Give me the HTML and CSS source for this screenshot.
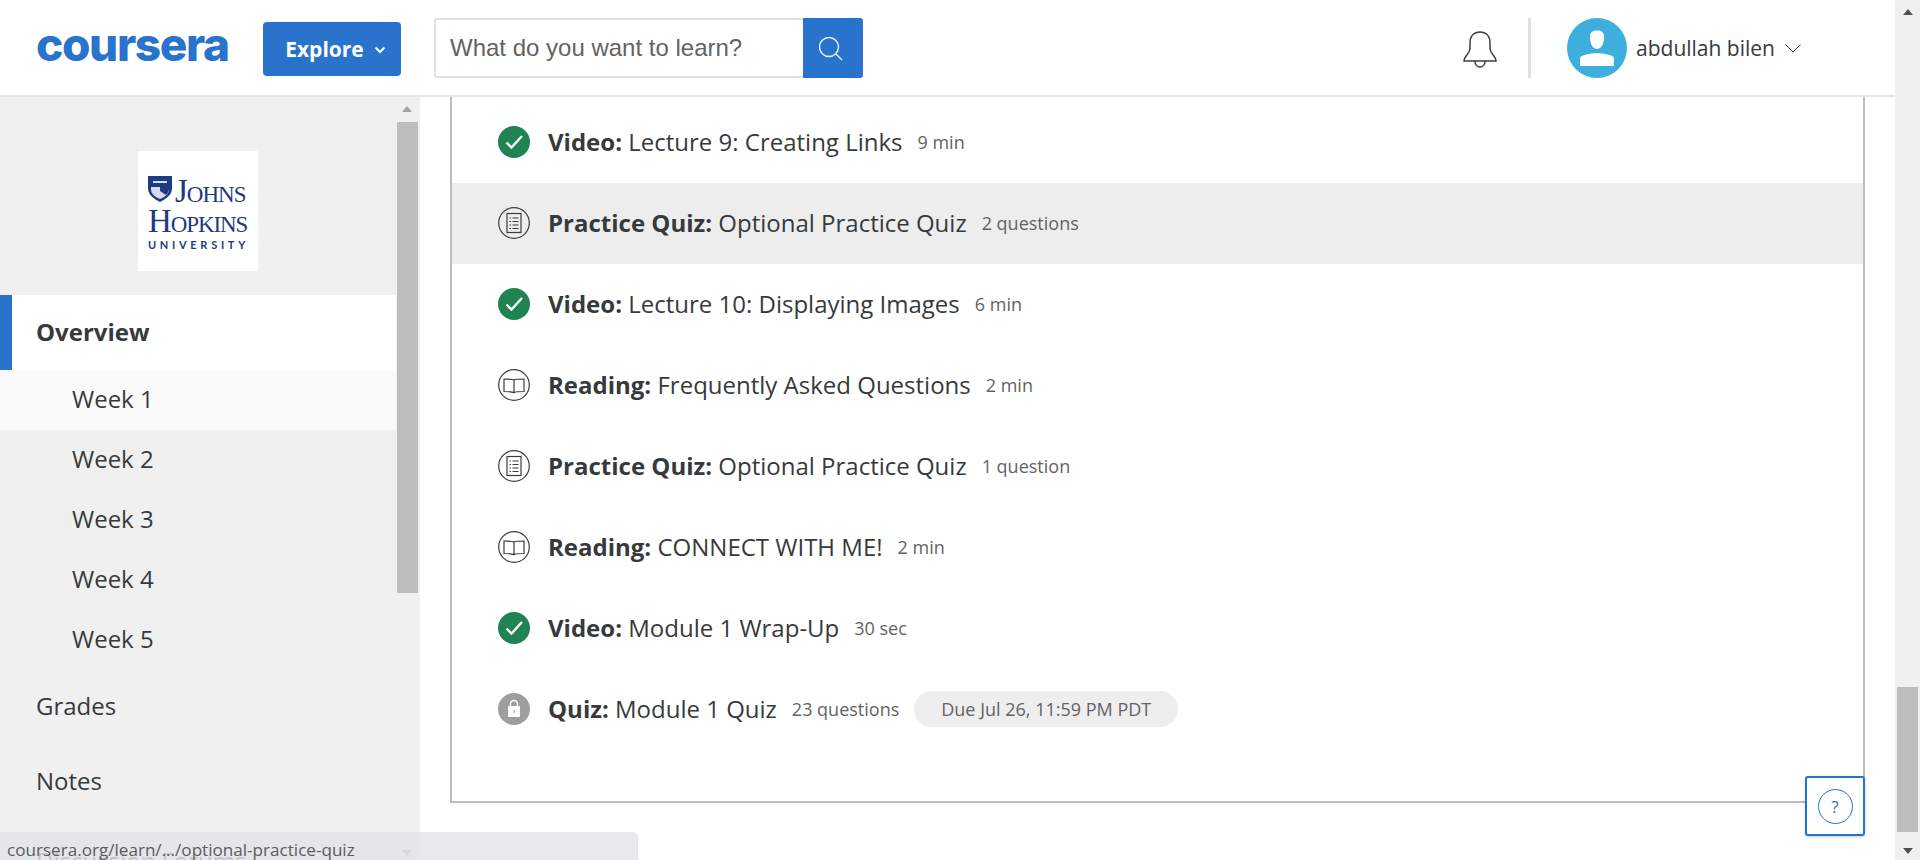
FILE: index.html
```html
<!DOCTYPE html>
<html lang="en">
<head>
    <meta charset="UTF-8">
    <meta name="viewport" content="width=device-width, initial-scale=1.0">
    <title>Coursera - Week 1</title>
    <link rel="stylesheet" href="styles.css">
</head>
<body>

    <svg class="icon-defs" aria-hidden="true">
        <symbol id="icon-done" viewBox="0 0 32 32">
            <circle cx="16" cy="16" r="16" fill="#1f8354"/>
            <path d="M8.500 16.500l5 5 10.500-11.500" fill="none" stroke="#fff" stroke-width="2.400"/>
        </symbol>
        <symbol id="icon-quiz" viewBox="0 0 32 32">
            <circle cx="16" cy="16" r="15.300" fill="none" stroke="#3c3c3c" stroke-width="1.200"/>
            <rect x="9" y="6.500" width="14" height="19" fill="none" stroke="#3c3c3c" stroke-width="1.200"/>
            <path d="M11.500 11h1.500M14.500 11h6M11.500 14.500h1.500M14.500 14.500h6M11.500 18h1.500M14.500 18h6M11.500 21.500h1.500M14.500 21.500h6" stroke="#3c3c3c" stroke-width="1.200"/>
        </symbol>
        <symbol id="icon-reading" viewBox="0 0 32 32">
            <circle cx="16" cy="16" r="15.300" fill="none" stroke="#3c3c3c" stroke-width="1.200"/>
            <path d="M16 11c-1.500-1-4-1-10-1v12.500c6 0 8.500 0 10 1.200 1.500-1.200 4-1.200 10-1.200V10c-6 0-8.500 0-10 1zM16 11v12.700" fill="none" stroke="#3c3c3c" stroke-width="1.200"/>
        </symbol>
        <symbol id="icon-locked" viewBox="0 0 32 32">
            <circle cx="16" cy="16" r="16" fill="#9e9e9e"/>
            <path d="M12.500 14v-3a3.500 3.500 0 0 1 7 0v3" fill="none" stroke="#fff" stroke-width="1.400"/>
            <rect x="10" y="13" width="12" height="11" rx="1" fill="#fff"/>
            <rect x="15.500" y="17" width="1" height="3" fill="#9e9e9e"/>
        </symbol>
    </svg>

    <div class="window">
        <div class="page">
            <header class="topbar">
                <a class="logo">coursera</a>
                <button class="explore">Explore
                    <svg class="explore-arrow" viewBox="0 0 12 8"><path d="M1.500 1.500L6 6l4.500-4.500" fill="none" stroke="#fff" stroke-width="2"/></svg>
                </button>
                <div class="search">
                    <div class="search-input">What do you want to learn?</div>
                    <div class="search-button">
                        <svg viewBox="0 0 28 28" width="28" height="28"><circle cx="10" cy="13" r="9.500" fill="none" stroke="#e4eefa" stroke-width="1.500"/><path d="M17 20l6 6" stroke="#e4eefa" stroke-width="1.500"/></svg>
                    </div>
                </div>
                <div class="topbar-right">
                    <svg class="bell" viewBox="0 0 34 38" width="34" height="38">
                        <path d="M1 30c0-5 5-6 6-12V12C7 5 11 1 17 1s10 4 10 11v6c1 6 6 7 6 12zM12 30c0 8 10 8 10 0" fill="none" stroke="#3c3c3c" stroke-width="1.500"/>
                    </svg>
                    <div class="divider"></div>
                    <svg class="avatar" viewBox="0 0 60 60" width="60" height="60">
                        <circle cx="30" cy="30" r="30" fill="#3eafdc"/>
                        <path d="M23 18c0-4 3-5.500 7-5.500s7 1.500 7 5.500c0 6-1 12-7 13-6-1-7-7-7-13z" fill="#fff"/>
                        <path d="M13 48v-7c0-2 1-3 3-3.500 5-1.500 9-2.500 14-2.500s9 1 14 2.500c2 .5 3 1.500 3 3.500v7z" fill="#fff"/>
                    </svg>
                    <span class="user-name">abdullah bilen</span>
                    <svg class="user-arrow" viewBox="0 0 16 9" width="16" height="9"><path d="M.5 .5L8 8l7.500-7.500" fill="none" stroke="#3c3c3c" stroke-width="1"/></svg>
                </div>
            </header>

            <div class="content">
                <aside class="sidebar">
                    <nav class="side-nav">
                        <div class="uni-logo-wrap">
                            <div class="uni-logo">
                                <div class="uni-line">
                                    <svg class="uni-shield" viewBox="0 0 24 26" width="24" height="26">
                                        <path d="M0 0h24v12c0 7-6 11-12 14C6 23 0 19 0 12z" fill="#1d3b80"/>
                                        <path d="M3 11h18v2c0 5-4 8-9 10-5-2-9-5-9-10z" fill="#d5dbe8"/>
                                        <path d="M12 11h9v2c0 2-1 4-3 6l-6-4z" fill="#1d3b80"/>
                                        <path d="M5 5h14v2H5z" fill="#d5dbe8"/>
                                    </svg>
                                    <span class="uni-name">Johns</span>
                                </div>
                                <div class="uni-name uni-name-wide">Hopkins</div>
                                <div class="uni-sub">UNIVERSITY</div>
                            </div>
                        </div>
                        <a class="side-link side-active">Overview</a>
                        <a class="side-week side-week-open">Week 1</a>
                        <a class="side-week">Week 2</a>
                        <a class="side-week">Week 3</a>
                        <a class="side-week">Week 4</a>
                        <a class="side-week">Week 5</a>
                        <a class="side-link side-link-first">Grades</a>
                        <a class="side-link">Notes</a>
                        <a class="side-link side-link-last">Discussion Forums</a>
                    </nav>
                    <div class="scroll scroll-side">
                        <span class="arrow-up"></span>
                        <span class="thumb"></span>
                        <span class="arrow-down"></span>
                    </div>
                </aside>

                <main class="main">
                    <div class="card">
                        <div class="item">
                            <svg class="item-icon"><use href="#icon-done"/></svg>
                            <div class="item-text"><b>Video:</b> Lecture 9: Creating Links</div>
                            <span class="item-meta">9 min</span>
                        </div>
                        <div class="item item-hover">
                            <svg class="item-icon"><use href="#icon-quiz"/></svg>
                            <div class="item-text"><b>Practice Quiz:</b> Optional Practice Quiz</div>
                            <span class="item-meta">2 questions</span>
                        </div>
                        <div class="item">
                            <svg class="item-icon"><use href="#icon-done"/></svg>
                            <div class="item-text"><b>Video:</b> Lecture 10: Displaying Images</div>
                            <span class="item-meta">6 min</span>
                        </div>
                        <div class="item">
                            <svg class="item-icon"><use href="#icon-reading"/></svg>
                            <div class="item-text"><b>Reading:</b> Frequently Asked Questions</div>
                            <span class="item-meta">2 min</span>
                        </div>
                        <div class="item">
                            <svg class="item-icon"><use href="#icon-quiz"/></svg>
                            <div class="item-text"><b>Practice Quiz:</b> Optional Practice Quiz</div>
                            <span class="item-meta">1 question</span>
                        </div>
                        <div class="item">
                            <svg class="item-icon"><use href="#icon-reading"/></svg>
                            <div class="item-text"><b>Reading:</b> CONNECT WITH ME!</div>
                            <span class="item-meta">2 min</span>
                        </div>
                        <div class="item">
                            <svg class="item-icon"><use href="#icon-done"/></svg>
                            <div class="item-text"><b>Video:</b> Module 1 Wrap-Up</div>
                            <span class="item-meta">30 sec</span>
                        </div>
                        <div class="item">
                            <svg class="item-icon"><use href="#icon-locked"/></svg>
                            <div class="item-text"><b>Quiz:</b> Module 1 Quiz</div>
                            <span class="item-meta">23 questions</span>
                            <span class="due">Due Jul 26, 11:59 PM PDT</span>
                        </div>
                    </div>
                </main>
            </div>
        </div>

        <div class="scroll scroll-page">
            <span class="arrow-up"></span>
            <span class="thumb"></span>
            <span class="arrow-down"></span>
        </div>
    </div>

    <button class="help">
        <span class="help-circle">?</span>
    </button>

    <div class="status">coursera.org/learn/.../optional-practice-quiz</div>

</body>
</html>
```

FILE: styles.css
```css
body {
    font-family: 'Open Sans', sans-serif;
    margin: 0;
    padding: 0;
    height: 860px;
    overflow: hidden;
    background-color: #fff;
    color: #373a3c;
}

.icon-defs {
    display: none;
}

.window {
    display: flex;
    height: 860px;
}

.page {
    flex: 1;
    min-width: 0;
    display: flex;
    flex-direction: column;
}

/* top bar */

.topbar {
    flex: none;
    display: flex;
    align-items: center;
    padding-left: 36px;
    box-sizing: border-box;
    border-bottom: 2px solid #e5e5e5;
    height: 97px;
}

.logo {
    width: 227px;
    margin-bottom: 7px;
    font-family: 'Inter', sans-serif;
    font-weight: 800;
    font-size: 46px;
    letter-spacing: -1.4px;
    line-height: 50px;
    color: #2a73cc;
}

.explore {
    width: 138px;
    height: 54px;
    flex: none;
    margin-top: 2px;
    border: none;
    border-radius: 4px;
    background-color: #2a73cc;
    color: #fff;
    font-family: 'Open Sans', sans-serif;
    font-weight: 700;
    font-size: 21px;
    display: flex;
    align-items: center;
    justify-content: center;
    gap: 10px;
    padding: 0 0 0 7px;
}

.explore-arrow {
    width: 12px;
    height: 8px;
    margin-top: 2px;
}

.search {
    display: flex;
    height: 60px;
    margin-left: 33px;
    margin-top: 1px;
}

.search-input {
    width: 369px;
    box-sizing: border-box;
    border: 2px solid #e1e1e1;
    border-right: none;
    border-radius: 3px 0 0 3px;
    padding-left: 14px;
    font-family: 'Liberation Sans', sans-serif;
    font-size: 24px;
    line-height: 55px;
    color: #636363;
}

.search-button {
    width: 60px;
    border-radius: 0 3px 3px 0;
    background-color: #2a73cc;
    display: flex;
    align-items: center;
    justify-content: center;
}

.topbar-right {
    margin-left: auto;
    display: flex;
    align-items: center;
    padding-right: 94px;
}

.bell {
    margin-top: 4px;
}

.divider {
    width: 3px;
    height: 60px;
    margin: 0 36px 0 31px;
    background-color: #e0e0e0;
}

.user-name {
    margin-left: 9px;
    font-size: 21px;
    color: #373a3c;
}

.user-arrow {
    margin-left: 10px;
    margin-top: 2px;
}

/* sidebar and main column */

.content {
    flex: 1;
    min-height: 0;
    display: flex;
}

.sidebar {
    width: 420px;
    flex: none;
    display: flex;
    background-color: #f0f0f0;
    overflow: hidden;
}

.side-nav {
    width: 396px;
    flex: none;
    height: 800px;
}

.uni-logo-wrap {
    height: 198px;
    padding-top: 54px;
    box-sizing: border-box;
    display: flex;
    justify-content: center;
}

.uni-logo {
    width: 120px;
    height: 120px;
    padding: 25px 0 0 10px;
    box-sizing: border-box;
    background-color: #fff;
    color: #1d3b80;
}

.uni-line {
    display: flex;
    align-items: flex-start;
    gap: 3px;
}

.uni-name {
    font-family: 'Liberation Serif', serif;
    font-variant: small-caps;
    font-size: 33px;
    line-height: 30px;
    letter-spacing: -1px;
}

.uni-name-wide {
    letter-spacing: -1.100px;
}

.uni-sub {
    font-family: 'Lato', sans-serif;
    font-weight: 700;
    font-size: 11px;
    line-height: 12px;
    letter-spacing: 3.700px;
    margin-top: 3px;
}

.side-link {
    display: block;
    height: 75px;
    padding-left: 36px;
    font-size: 24px;
    line-height: 73px;
}

.side-active {
    background-color: #fff;
    box-shadow: inset 12px 0 0 #2a73cc;
    font-weight: 700;
}

.side-week {
    display: block;
    height: 60px;
    padding-left: 72px;
    font-size: 24px;
    line-height: 58px;
}

.side-week-open {
    background-color: #fafafa;
}

.side-link-first {
    height: 74px;
    line-height: 72px;
}

.side-link-last {
    margin-top: 5px;
}

.main {
    flex: 1;
    min-width: 0;
    padding-left: 30px;
    padding-right: 30px;
}

.card {
    height: 706px;
    box-sizing: border-box;
    padding-top: 5px;
    border: 2px solid #bdbdbd;
    border-top: none;
}

.item {
    height: 81px;
    padding-left: 46px;
    display: flex;
    align-items: center;
}

.item-hover {
    background-color: #ededed;
}

.item-icon {
    width: 32px;
    height: 32px;
    flex: none;
    margin-right: 18px;
    margin-top: -2px;
}

.item-text {
    font-size: 24px;
    line-height: 32px;
    margin-top: -2px;
}

.item-text b {
    font-weight: 700;
}

.item-meta {
    margin-left: 15px;
    margin-top: -2px;
    font-size: 18px;
    color: #636363;
}

.due {
    margin-left: 15px;
    margin-top: -2px;
    height: 36px;
    padding: 0 27px;
    border-radius: 18px;
    background-color: #eee;
    font-size: 18px;
    line-height: 36px;
    color: #636363;
}

/* scrollbars */

.scroll {
    flex: none;
    display: flex;
    flex-direction: column;
    align-items: center;
    background-color: #f0f0f0;
}

.scroll-side {
    width: 24px;
    padding-top: 9px;
}

.scroll-page {
    width: 25px;
    height: 860px;
    padding-top: 9px;
    box-sizing: border-box;
}

.thumb {
    display: block;
    width: 21px;
    background-color: #bdbdbd;
}

.scroll-side .thumb {
    height: 471px;
    margin-top: 10px;
    margin-right: 2px;
}

.scroll-page .thumb {
    height: 145px;
    margin-top: 672px;
}

.arrow-up,
.arrow-down {
    display: block;
    width: 0;
    height: 0;
    border-left: 5px solid transparent;
    border-right: 5px solid transparent;
}

.arrow-up {
    border-bottom: 6px solid #505050;
}

.arrow-down {
    border-top: 6px solid #505050;
    margin-top: 16px;
}

.scroll-side .arrow-up {
    border-bottom-color: #a3a3a3;
    margin-right: 2px;
}

.scroll-side .arrow-down {
    border-top-color: #a3a3a3;
    margin-top: 257px;
    margin-right: 2px;
}

/* overlays */

.help {
    position: absolute;
    left: 1805px;
    top: 776px;
    width: 60px;
    height: 60px;
    padding: 0;
    background-color: #fff;
    border: 2px solid #2a73cc;
    border-radius: 3px;
    box-shadow: 0 1px 3px rgba(0, 0, 0, 0.2);
    display: flex;
    align-items: center;
    justify-content: center;
}

.help-circle {
    width: 33px;
    height: 33px;
    border: 1px solid #2a73cc;
    border-radius: 50%;
    font-family: 'Open Sans', sans-serif;
    font-size: 17px;
    line-height: 33px;
    color: #2a73cc;
}

.status {
    position: absolute;
    left: 0;
    top: 832px;
    width: 631px;
    height: 28px;
    padding-left: 7px;
    border-top-right-radius: 6px;
    background-color: rgba(226, 227, 232, 0.82);
    font-size: 17.100px;
    line-height: 36px;
    color: #5a5c60;
    overflow: hidden;
}
```
